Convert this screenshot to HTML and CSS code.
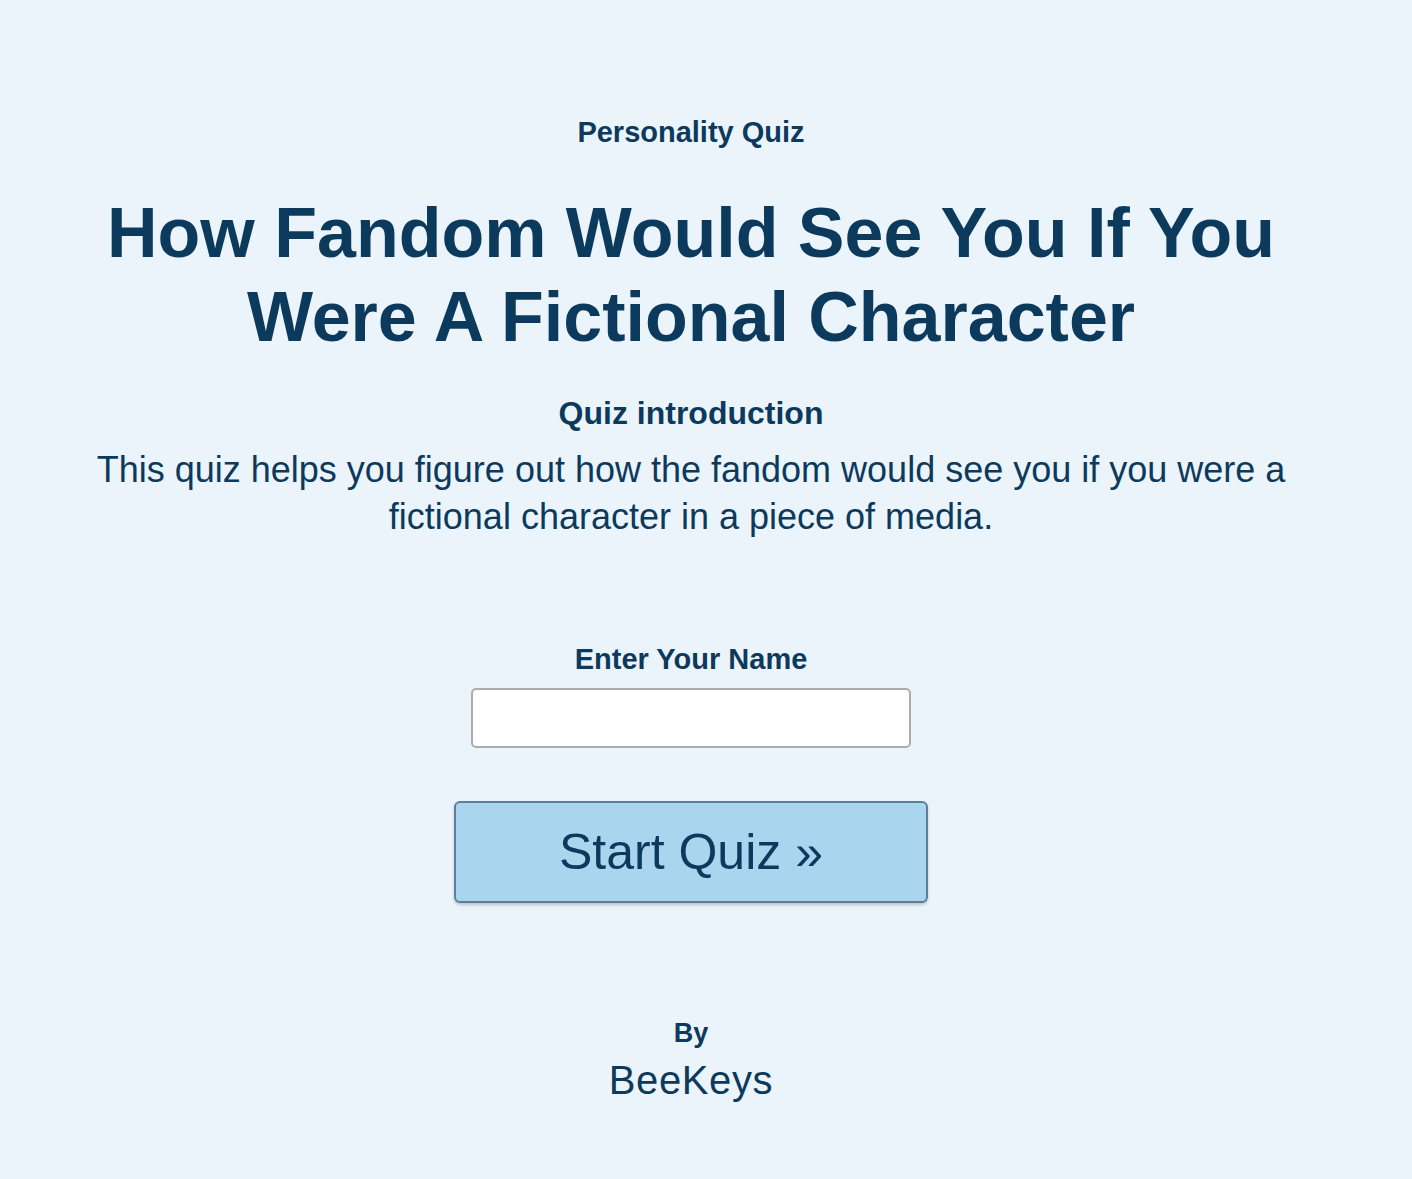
FILE: index.html
```html
<!DOCTYPE html>
<html lang="en">
<head>
<meta charset="utf-8">
<title>How Fandom Would See You If You Were A Fictional Character</title>
<link rel="stylesheet" href="styles.css">
</head>
<body>
<main class="quiz">
  <p class="kicker">Personality Quiz</p>
  <h1 class="title">How Fandom Would See You If You Were A Fictional Character</h1>
  <h2 class="intro-heading">Quiz introduction</h2>
  <p class="intro-text">This quiz helps you figure out how the fandom would see you if you were a fictional character in a piece of media.</p>
  <form class="start-form">
    <label class="name-label" for="name">Enter Your Name</label>
    <input class="name-input" id="name" type="text">
    <button class="start-btn" type="button">Start Quiz »</button>
  </form>
  <div class="author">
    <div class="author-by">By</div>
    <div class="author-name">BeeKeys</div>
  </div>
</main>
</body>
</html>
```
FILE: styles.css
```css
html, body {
  margin: 0;
  padding: 0;
  background: #ecf4fb;
}
body {
  padding-right: 30px;
  font-family: "Liberation Sans", Arial, sans-serif;
  color: #0c3a5c;
}
.quiz {
  max-width: 1240px;
  margin: 0 auto;
  padding-top: 115px;
  padding-bottom: 60px;
  text-align: center;
}
.kicker {
  margin: 0;
  font-size: 29px;
  line-height: 34px;
  font-weight: bold;
}
.title {
  margin: 42px 0 0;
  font-size: 70px;
  line-height: 84px;
  font-weight: bold;
}
.intro-heading {
  margin: 36px 0 0;
  font-size: 32px;
  line-height: 36px;
  font-weight: bold;
}
.intro-text {
  margin: 15px 0 0;
  font-size: 36px;
  line-height: 47px;
  font-weight: normal;
}
.start-form {
  display: flex;
  flex-direction: column;
  align-items: center;
  margin-top: 102px;
}
.name-label {
  font-size: 29px;
  line-height: 34px;
  font-weight: bold;
}
.name-input {
  box-sizing: border-box;
  width: 440px;
  height: 60px;
  margin-top: 12px;
  border: 2px solid #acacac;
  border-radius: 5px;
  background: #fff;
  font-size: 24px;
  font-family: inherit;
}
.start-btn {
  box-sizing: border-box;
  width: 474px;
  height: 102px;
  margin-top: 53px;
  border: 2px solid #5d7f98;
  border-radius: 6px;
  background: #a9d5ee;
  color: #0c3a5c;
  font-family: inherit;
  font-size: 50px;
  box-shadow: 0 2px 3px rgba(0, 0, 0, 0.2);
}
.author {
  margin-top: 114px;
}
.author-by {
  font-size: 27px;
  line-height: 32px;
  font-weight: bold;
}
.author-name {
  margin-top: 8px;
  font-size: 40px;
  line-height: 46px;
  letter-spacing: 0.6px;
}
```
